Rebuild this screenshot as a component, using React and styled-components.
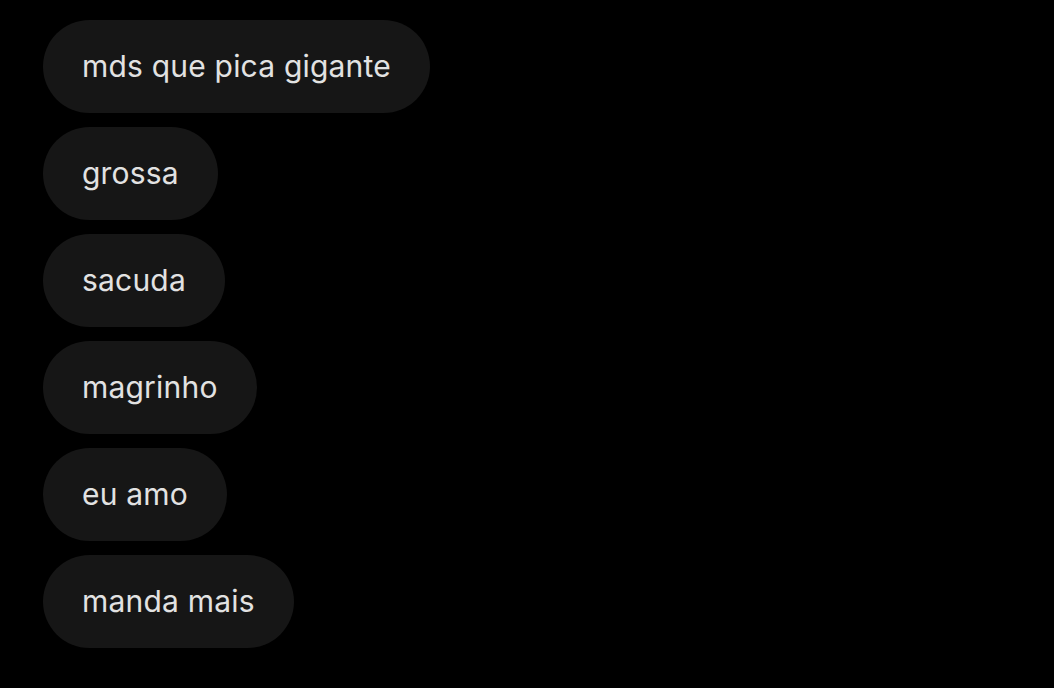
import React from "react";
import styled, { createGlobalStyle } from "styled-components";

const Global = createGlobalStyle`
  html, body { margin: 0; padding: 0; background: #000; }
  body { font-family: Inter, "Noto Sans", "Liberation Sans", sans-serif; }
`;

const Page = styled.div`
  width: 1054px;
  height: 688px;
  background: #000;
  box-sizing: border-box;
  padding: 20px 0 0 43px;
  display: flex;
  flex-direction: column;
  align-items: flex-start;
  gap: 14px;
`;

const Bubble = styled.div`
  background: #161616;
  color: #e2e2e2;
  height: 93px;
  box-sizing: border-box;
  padding: 0 39px 2px 39px;
  border-radius: 47px;
  display: flex;
  align-items: center;
  font-size: 30px;
  font-weight: 400;
  letter-spacing: 0.2px;
  white-space: nowrap;
`;

const messages = [
  "mds que pica gigante",
  "grossa",
  "sacuda",
  "magrinho",
  "eu amo",
  "manda mais",
];

export default function App() {
  return (
    <>
      <Global />
      <Page>
        {messages.map((m) => (
          <Bubble key={m}>{m}</Bubble>
        ))}
      </Page>
    </>
  );
}
